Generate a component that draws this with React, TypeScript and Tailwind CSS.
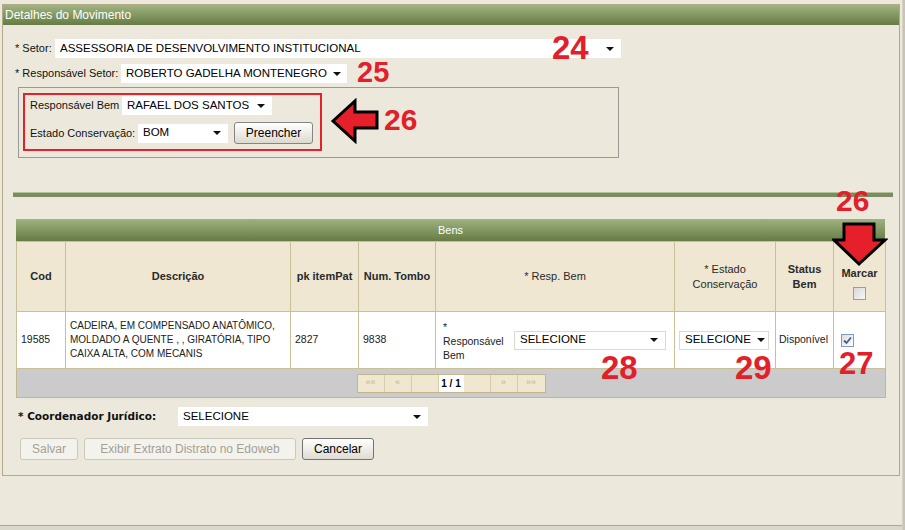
import React from 'react';

// Dropdown look-alike (old XP style select)
function Select({ value, className = '' }: { value: string; className?: string }) {
  return (
    <div className={`flex items-center justify-between bg-white h-[19px] pl-[5px] pr-[7px] text-[11.5px] text-black ${className}`}>
      <span className="whitespace-nowrap">{value}</span>
      <svg width="8" height="4" viewBox="0 0 8 4" className="shrink-0 ml-[6px]">
        <path d="M0 0h8L4 4z" fill="#111" />
      </svg>
    </div>
  );
}

function Checkbox({ checked }: { checked?: boolean }) {
  if (checked) {
    return (
      <div className="w-[13px] h-[13px] border border-[#7f9db9] bg-gradient-to-br from-[#dcdcd7] to-white flex items-center justify-center">
        <svg width="9" height="9" viewBox="0 0 9 9">
          <path d="M1 4.5l2.5 2.5L8 1.5" stroke="#3a5fa8" strokeWidth="1.8" fill="none" />
        </svg>
      </div>
    );
  }
  return <div className="w-[13px] h-[13px] border border-[#9c9c9c] bg-gradient-to-br from-[#d8d8d8] to-[#f6f6f6]" />;
}

const Num = ({ n, className }: { n: string; className: string }) => (
  <div className={`absolute font-bold leading-none text-[#e3202a] font-['Liberation_Sans',Arial,sans-serif] ${className}`}>{n}</div>
);

export default function App() {
  const pager = ['««', '«', '', '1 / 1', '', '»', '»»'];

  return (
    <div className="relative w-[905px] h-[530px] overflow-hidden bg-[#ece9dc] font-['Liberation_Sans',Arial,sans-serif] text-[#111]">
      <div className="flex">
        <div className="w-[902px]">
          <div className="h-[4px]" />

          {/* Panel */}
          <div className="ml-[2px] w-[898px] h-[472px] border border-[#b3a984]">
            <div className="h-[20px] bg-gradient-to-b from-[#a0b482] to-[#667c44] text-white text-[12px] leading-[20px] pl-[2px]">
              Detalhes do Movimento
            </div>

            <div className="pt-[14px]">
              <div className="flex items-center h-[19px] pl-[12px]">
                <span className="text-[11px] w-[40px]">* Setor:</span>
                <Select value="ASSESSORIA DE DESENVOLVIMENTO INSTITUCIONAL" className="w-[566px]" />
              </div>

              <div className="flex items-center h-[19px] pl-[12px] mt-[6px]">
                <span className="text-[11px] w-[106px]">* Responsável Setor:</span>
                <Select value="ROBERTO GADELHA MONTENEGRO" className="w-[226px]" />
              </div>

              <div className="ml-[15px] mt-[4px] w-[601px] h-[71px] border border-[#9a9a94] pl-[4px] pt-[5px]">
                <div className="w-[299px] h-[58px] border-2 border-[#e5202a] pl-[5px] pt-[1px]">
                  <div className="flex items-center h-[19px]">
                    <span className="text-[11px] w-[92px]">Responsável Bem</span>
                    <Select value="RAFAEL DOS SANTOS" className="w-[150px]" />
                  </div>
                  <div className="flex items-center h-[22px] mt-[7px]">
                    <span className="text-[11px] w-[108px]">Estado Conservação:</span>
                    <Select value="BOM" className="w-[90px]" />
                    <button className="ml-[6px] w-[79px] h-[22px] rounded-[3px] border border-[#858585] bg-gradient-to-b from-white to-[#dcdad0] text-[12px] text-black">
                      Preencher
                    </button>
                  </div>
                </div>
              </div>

              <div className="ml-[10px] mt-[34px] w-[880px] h-[5px] bg-[#7b8d5f] border-t border-[#b4bf9c]" />

              {/* Bens table */}
              <div className="ml-[13px] mt-[22px] w-[869px]">
                <div className="h-[22px] bg-gradient-to-b from-[#9fb380] to-[#667c44] text-white text-[11px] leading-[22px] text-center">
                  Bens
                </div>
                <table className="w-[869px] table-fixed border-collapse">
                  <colgroup>
                    <col className="w-[49px]" />
                    <col className="w-[225px]" />
                    <col className="w-[68px]" />
                    <col className="w-[77px]" />
                    <col className="w-[239px]" />
                    <col className="w-[101px]" />
                    <col className="w-[58px]" />
                    <col className="w-[52px]" />
                  </colgroup>
                  <thead>
                    <tr className="h-[70px] bg-[#efe7d2] text-[11px] font-bold text-[#2a2a2a]">
                      <th className="border border-[#cbbf98] font-bold">Cod</th>
                      <th className="border border-[#cbbf98] font-bold">Descrição</th>
                      <th className="border border-[#cbbf98] font-bold">pk itemPat</th>
                      <th className="border border-[#cbbf98] font-bold">Num. Tombo</th>
                      <th className="border border-[#cbbf98] font-normal">* Resp. Bem</th>
                      <th className="border border-[#cbbf98] font-normal leading-[15px]">
                        * Estado
                        <br />
                        Conservação
                      </th>
                      <th className="border border-[#cbbf98] font-bold leading-[15px]">
                        Status
                        <br />
                        Bem
                      </th>
                      <th className="border border-[#cbbf98] font-bold">
                        <div className="flex flex-col items-center pt-[12px]">
                          <span>Marcar</span>
                          <div className="mt-[5px]">
                            <Checkbox />
                          </div>
                        </div>
                      </th>
                    </tr>
                  </thead>
                  <tbody>
                    <tr className="h-[57px] bg-white text-[10.5px] text-[#222]">
                      <td className="border border-[#cbbf98] pl-[4px]">19585</td>
                      <td className="border border-[#cbbf98] pl-[4px] text-[10px] leading-[14px] whitespace-nowrap">
                        CADEIRA, EM COMPENSADO ANATÔMICO,
                        <br />
                        MOLDADO A QUENTE , , GIRATÓRIA, TIPO
                        <br />
                        CAIXA ALTA, COM MECANIS
                      </td>
                      <td className="border border-[#cbbf98] pl-[4px]">2827</td>
                      <td className="border border-[#cbbf98] pl-[4px]">9838</td>
                      <td className="border border-[#cbbf98]">
                        <div className="flex items-center pl-[7px]">
                          <div className="w-[71px] leading-[14px] pt-[1px]">
                            *
                            <br />
                            Responsável
                            <br />
                            Bem
                          </div>
                          <Select value="SELECIONE" className="w-[152px] border border-[#dcdad0]" />
                        </div>
                      </td>
                      <td className="border border-[#cbbf98] pl-[4px]">
                        <Select value="SELECIONE" className="w-[90px] border border-[#dcdad0]" />
                      </td>
                      <td className="border border-[#cbbf98] pl-[3px]">Disponível</td>
                      <td className="border border-[#cbbf98] pl-[7px]">
                        <Checkbox checked />
                      </td>
                    </tr>
                    <tr className="h-[29px] bg-[#cbcbcb]">
                      <td colSpan={8} className="border border-[#c0b690]">
                        <div className="flex justify-center">
                          <div className="flex border border-[#c2b68e] bg-[#efe7cf]">
                            {pager.map((p, i) => (
                              <div
                                key={i}
                                className={`h-[17px] flex items-center justify-center text-[9px] ${
                                  p === '1 / 1'
                                    ? 'w-[25px] bg-white font-bold text-[10px] text-black'
                                    : 'w-[27px] border-r border-[#d8cca6] text-[#c4b48a] last:border-r-0'
                                }`}
                              >
                                {p}
                              </div>
                            ))}
                          </div>
                        </div>
                      </td>
                    </tr>
                  </tbody>
                </table>
              </div>

              <div className="flex items-center h-[19px] pl-[15px] mt-[9px]">
                <span className="font-['DejaVu_Sans',Verdana,sans-serif] font-bold text-[10.5px] w-[160px] text-[#111]">
                  * Coordenador Jurídico:
                </span>
                <Select value="SELECIONE" className="w-[250px]" />
              </div>

              <div className="flex items-center pl-[17px] mt-[12px] gap-[6px]">
                <button className="w-[58px] h-[22px] rounded-[3px] border border-[#cbc9bc] bg-[#f3f2ec] text-[12px] text-[#a3a197]">
                  Salvar
                </button>
                <button className="w-[212px] h-[22px] rounded-[3px] border border-[#cbc9bc] bg-[#f3f2ec] text-[12px] text-[#a3a197]">
                  Exibir Extrato Distrato no Edoweb
                </button>
                <button className="w-[72px] h-[22px] rounded-[3px] border border-[#737373] bg-gradient-to-b from-white to-[#dedcd2] text-[12px] text-black">
                  Cancelar
                </button>
              </div>
            </div>
          </div>

          <div className="h-[49px]" />
          <div className="h-[5px] border-t border-[#b3a984] bg-[#dad7cb]" />
        </div>
        <div className="w-[3px] h-[530px] border-l border-[#d6d3c6] bg-[#c8c5b8]" />
      </div>

      {/* annotations */}
      <Num n="24" className="left-[552px] top-[31px] text-[33px]" />
      <Num n="25" className="left-[357px] top-[58px] text-[29px]" />
      <Num n="26" className="left-[384px] top-[105px] text-[30px]" />
      <Num n="26" className="left-[836px] top-[186px] text-[30px]" />
      <Num n="27" className="left-[839px] top-[348px] text-[31px]" />
      <Num n="28" className="left-[601px] top-[351px] text-[33px]" />
      <Num n="29" className="left-[735px] top-[351px] text-[33px]" />

      <svg className="absolute left-[330px] top-[98px]" width="50" height="46" viewBox="0 0 50 46">
        <polygon points="3,23 25,3 25,14 47,14 47,30 25,30 25,43" fill="#e5202a" stroke="#000" strokeWidth="3" />
      </svg>
      <svg className="absolute left-[832px] top-[221px]" width="56" height="46" viewBox="0 0 56 46">
        <polygon points="12,3 42,3 42,19 53,19 27,43 2,19 12,19" fill="#e5202a" stroke="#000" strokeWidth="3" />
      </svg>
    </div>
  );
}
